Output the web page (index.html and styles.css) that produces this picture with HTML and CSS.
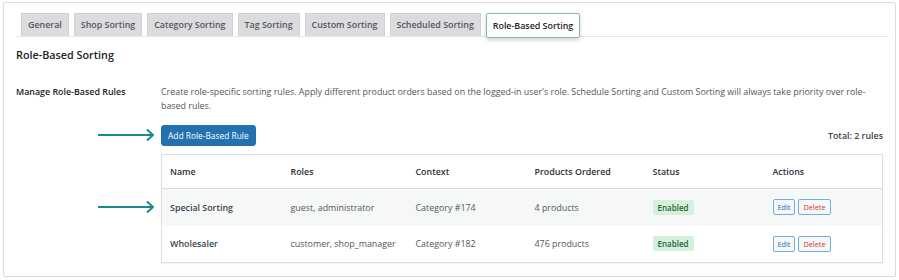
FILE: index.html
```html
<!DOCTYPE html>
<html>
<head>
<meta charset="utf-8">
<link rel="stylesheet" href="styles.css">
</head>
<body>
<div class="card">
  <div class="tabs">
    <span class="tab">General</span>
    <span class="tab">Shop Sorting</span>
    <span class="tab">Category Sorting</span>
    <span class="tab">Tag Sorting</span>
    <span class="tab">Custom Sorting</span>
    <span class="tab">Scheduled Sorting</span>
    <span class="tab active">Role-Based Sorting</span>
  </div>
  <h2 class="title">Role-Based Sorting</h2>
  <div class="section">
    <div class="label">Manage Role-Based Rules</div>
    <div class="content">
      <p class="desc">Create role-specific sorting rules. Apply different product orders based on the logged-in user's role. Schedule Sorting and Custom Sorting will always take priority over role-based rules.</p>
      <div class="toolbar">
        <span class="arrow arrow-btn"><svg width="58" height="14" viewBox="0 0 58 14"><path d="M0 7H55M49 1.5L55 7L49 12.5" fill="none" stroke="#1b8a8c" stroke-width="2"/></svg></span>
        <button class="btn-primary">Add Role-Based Rule</button>
        <span class="total">Total: 2 rules</span>
      </div>
      <div class="table-wrap">
        <span class="arrow arrow-row"><svg width="58" height="14" viewBox="0 0 58 14"><path d="M0 7H55M49 1.5L55 7L49 12.5" fill="none" stroke="#1b8a8c" stroke-width="2"/></svg></span>
        <table class="rules">
          <thead>
            <tr><th class="c1">Name</th><th class="c2">Roles</th><th class="c3">Context</th><th class="c4">Products Ordered</th><th class="c5">Status</th><th>Actions</th></tr>
          </thead>
          <tbody>
            <tr class="alt"><td class="name">Special Sorting</td><td>guest, administrator</td><td>Category #174</td><td>4 products</td><td><span class="badge">Enabled</span></td><td><span class="btn-sm edit">Edit</span><span class="btn-sm del">Delete</span></td></tr>
            <tr><td class="name">Wholesaler</td><td>customer, shop_manager</td><td>Category #182</td><td>476 products</td><td><span class="badge">Enabled</span></td><td><span class="btn-sm edit">Edit</span><span class="btn-sm del">Delete</span></td></tr>
          </tbody>
        </table>
      </div>
    </div>
  </div>
</div>
</body>
</html>
```

FILE: styles.css
```css
* { box-sizing: border-box; }
body {
  margin: 0;
  background: #fff;
  font-family: "Open Sans", "Noto Sans", sans-serif;
  color: #3c434a;
  font-size: 8.9px;
}
.card {
  margin: 2px 3px 0 3px;
  height: 275px;
  border: 1px solid #dcdcde;
  border-radius: 2px;
  padding: 10px 6px 0 12px;
}
.tabs {
  display: flex;
  gap: 5px;
  padding-left: 5px;
  border-bottom: 1px solid #e5e5e5;
  height: 24px;
  align-items: flex-end;
}
.tab {
  height: 23px;
  padding: 0 6px;
  background: #dcdcde;
  border: 1px solid #d2d2d4;
  border-bottom: none;
  color: #50575e;
  font-weight: 600;
  font-size: 8.9px;
  line-height: 22px;
  white-space: nowrap;
}
.tab.active {
  background: #fff;
  color: #1d2327;
  height: 25px;
  margin-bottom: -2px;
  border: 1px solid #7fb8be;
  border-radius: 2px;
  box-shadow: 0 2px 4px rgba(0,0,0,0.18);
  line-height: 23px;
}
.title {
  margin: 10px 0 0 0;
  font-size: 10.8px;
  font-weight: 600;
  color: #1d2327;
  line-height: 16px;
}
.section {
  display: flex;
  margin-top: 22px;
}
.label {
  width: 145px;
  flex: none;
  font-weight: 600;
  color: #1d2327;
  line-height: 14px;
}
.content {
  flex: 1;
  padding-right: 6px;
}
.desc {
  margin: 0;
  line-height: 14px;
  color: #50575e;
  max-width: 722px;
}
.toolbar {
  position: relative;
  display: flex;
  align-items: center;
  justify-content: space-between;
  margin-top: 12px;
  width: 722px;
}
.arrow { position: absolute; display: block; line-height: 0; }
.arrow-btn { left: -63px; top: 3px; }
.arrow-row { left: -63px; top: 46px; }
.btn-primary {
  background: #2271b1;
  border: 1px solid #2271b1;
  border-radius: 3px;
  color: #fff;
  font-family: inherit;
  font-size: 8.4px;
  height: 21px;
  padding: 0 6px;
  white-space: nowrap;
}
.total {
  font-weight: 600;
  color: #3c434a;
}
.table-wrap {
  position: relative;
  margin-top: 8px;
  width: 722px;
}
.rules {
  width: 100%;
  border-collapse: collapse;
  border: 1px solid #dcdcde;
  box-shadow: 0 1px 1px rgba(0,0,0,0.04);
}
.rules th {
  text-align: left;
  font-weight: 600;
  color: #2c3338;
  height: 34px;
  padding: 0 8px;
  border-bottom: 1px solid #dcdcde;
  white-space: nowrap;
}
.rules td {
  height: 37px;
  padding: 0 8px;
  color: #50575e;
  white-space: nowrap;
}
.rules td.name { font-weight: 600; color: #3c434a; }
.rules tr.alt td { background: #f6f7f7; }
.c1 { width: 121px; }
.c2 { width: 125px; }
.c3 { width: 119px; }
.c4 { width: 118px; }
.c5 { width: 120px; }
.badge {
  display: inline-block;
  background: #d5f0db;
  color: #2a6236;
  font-weight: 600;
  font-size: 8px;
  padding: 0 5px;
  height: 15px;
  line-height: 15px;
  border-radius: 2px;
}
.btn-sm {
  display: inline-block;
  height: 16px;
  line-height: 14px;
  font-size: 7.3px;
  padding: 0 4px;
  border-radius: 2px;
  background: #f6f7f7;
  margin-right: 3px;
}
.btn-sm.edit { border: 1px solid #72aee6; color: #2271b1; }
.btn-sm.del { border: 1px solid #72aee6; color: #d63638; }
```
